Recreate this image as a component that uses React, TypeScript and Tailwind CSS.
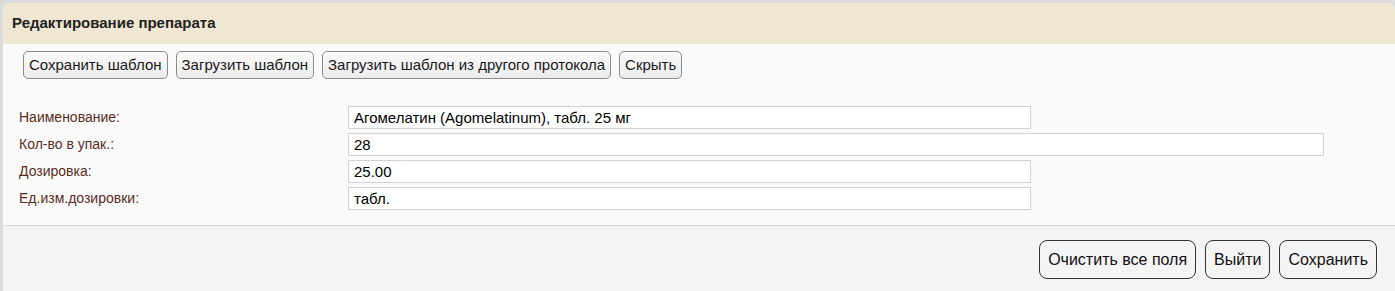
import React from 'react'

const fields = [
  { label: 'Наименование:', value: 'Агомелатин (Agomelatinum), табл. 25 мг', wide: false },
  { label: 'Кол-во в упак.:', value: '28', wide: true },
  { label: 'Дозировка:', value: '25.00', wide: false },
  { label: 'Ед.изм.дозировки:', value: 'табл.', wide: false },
]

const toolButtons = ['Сохранить шаблон', 'Загрузить шаблон', 'Загрузить шаблон из другого протокола', 'Скрыть']

export default function App() {
  return (
    <div
      className="h-[291px] w-[1395px] overflow-hidden bg-[#dcdcdc] pl-[3px] pt-[3px]"
      style={{ fontFamily: '"Liberation Sans", Arial, sans-serif' }}
    >
      <div className="flex h-full flex-col overflow-hidden rounded-t-[8px] bg-[#fafafa]">
        <div className="flex h-[41px] shrink-0 items-center bg-[#efe7d2] pl-[9px] text-[15px] font-bold text-[#222]">
          Редактирование препарата
        </div>

        <div className="flex gap-[8px] pl-[20px] pt-[7px]">
          {toolButtons.map((b) => (
            <button
              key={b}
              className="h-[28px] rounded-[5px] border border-[#8a8a8a] bg-gradient-to-b from-[#fafafa] to-[#ececec] px-[5px] text-[15px] text-[#1a1a1a]"
            >
              {b}
            </button>
          ))}
        </div>

        <div className="flex flex-col gap-[4px] pl-[16px] pt-[27px]">
          {fields.map((f) => (
            <div key={f.label} className="flex items-center">
              <div className="w-[329px] text-[14px] text-[#5a2d1e]">{f.label}</div>
              <input
                readOnly
                value={f.value}
                className={`h-[23px] border border-[#d2d2d2] bg-white px-[5px] text-[15px] text-black outline-none ${
                  f.wide ? 'w-[976px]' : 'w-[683px]'
                }`}
              />
            </div>
          ))}
        </div>

        <div className="mt-[15px] flex flex-1 items-start justify-end gap-[9px] border-t border-[#dadada] bg-[#f4f4f4] pr-[18px] pt-[14px]">
          {['Очистить все поля', 'Выйти', 'Сохранить'].map((b) => (
            <button
              key={b}
              className="h-[39px] rounded-[8px] border border-[#333] bg-[#f4f4f4] px-[8px] text-[16px] text-[#111]"
            >
              {b}
            </button>
          ))}
        </div>
      </div>
    </div>
  )
}
